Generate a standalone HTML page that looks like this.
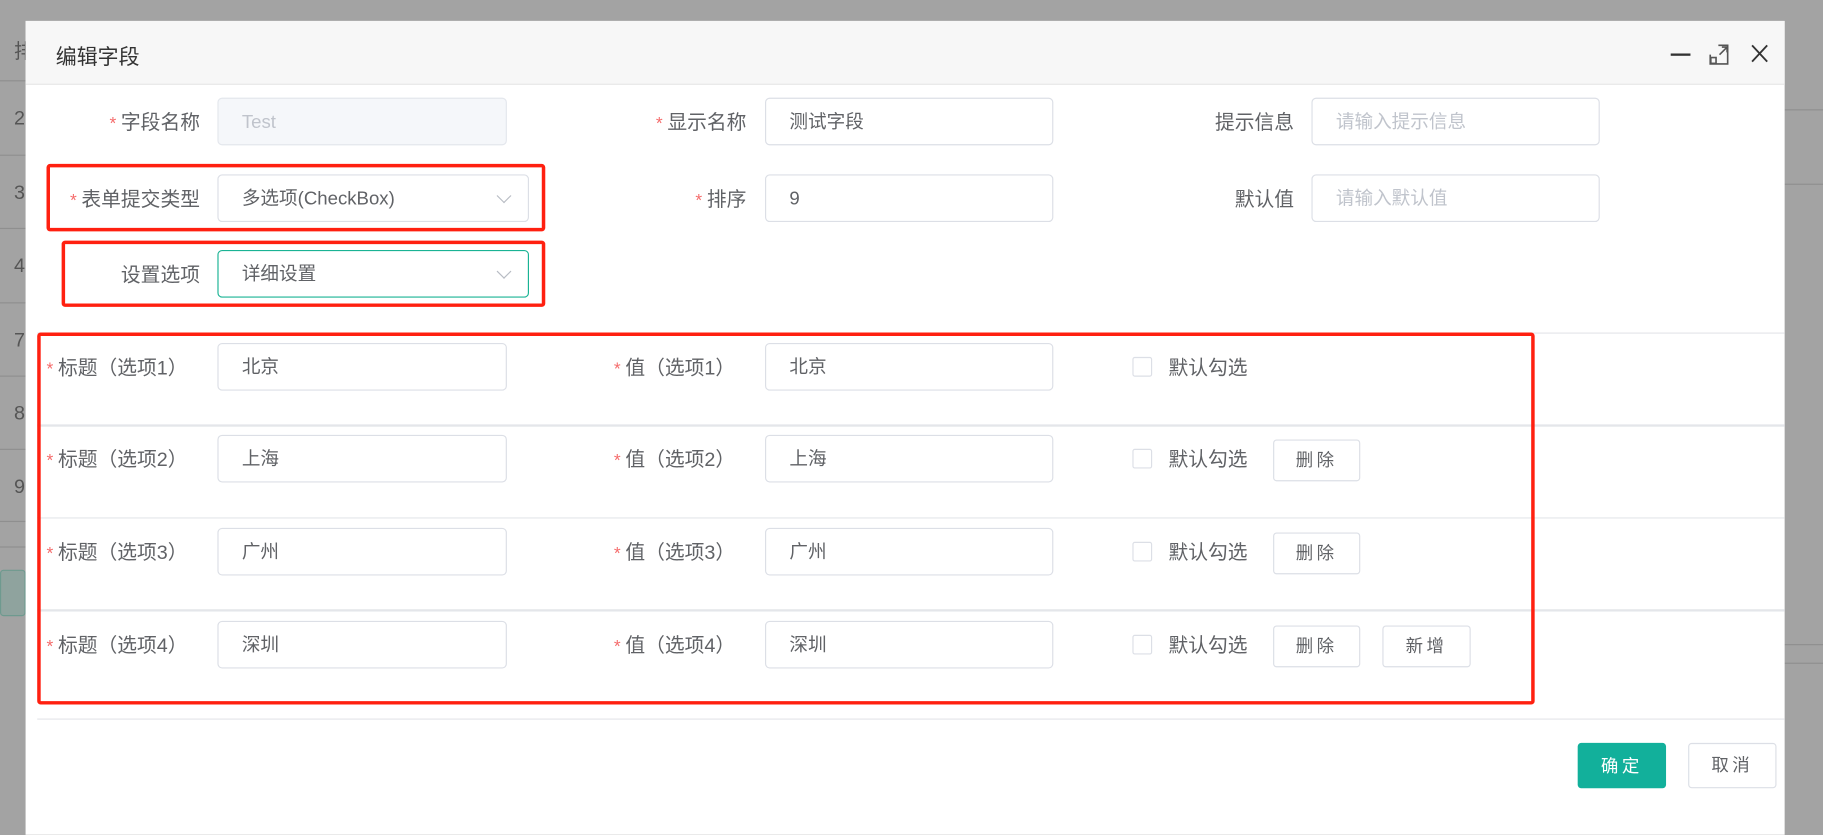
<!DOCTYPE html>
<html><head><meta charset="utf-8"><style>
html,body{margin:0;padding:0;width:1823px;height:825px;overflow:hidden;background:#a3a3a3;}
#s{position:absolute;left:0;top:0;width:1568px;height:710px;transform:scale(1.16263);transform-origin:0 0;font-family:"Liberation Sans","Noto Sans CJK SC",sans-serif;}
.a{position:absolute;}
.bg{color:#555;font-size:17px;}
.gl{position:absolute;height:1px;background:#8f8f8f;}
.dlg{position:absolute;left:22px;top:18px;width:1513px;height:700px;background:#fff;}
.hd{position:absolute;left:0;top:0;width:1513px;height:54px;background:#f7f7f7;border-bottom:1px solid #e8e8e8;}
.lb{position:absolute;font-size:17px;color:#606266;line-height:44px;white-space:nowrap;}
.r{text-align:right;}
.st{color:#f56c6c;margin-right:4px;font-size:15px;}
.in{position:absolute;box-sizing:border-box;border:1px solid #dcdfe6;border-radius:4px;height:41px;line-height:42px;padding-left:20px;font-size:16px;color:#606266;background:#fff;overflow:hidden;}
.ph{color:#c0c4cc;}
.chev{position:absolute;right:16px;top:13px;width:8px;height:8px;border-right:1px solid #b8bcc4;border-bottom:1px solid #b8bcc4;transform:rotate(45deg);}
.hl{position:absolute;left:10px;width:1503px;background:#e4e6ea;}
.red{position:absolute;border:3px solid #ff2010;border-radius:3px;box-sizing:border-box;}
.cb{position:absolute;width:17px;height:17px;border:1px solid #dcdfe6;border-radius:2px;box-sizing:border-box;}
.btn{position:absolute;box-sizing:border-box;border:1px solid #dcdfe6;border-radius:3px;height:36px;line-height:36px;text-align:center;font-size:15px;color:#606266;background:#fff;letter-spacing:3px;}
</style></head><body><div id="s">
<div class="a bg" style="left:12px;top:30px">排</div>
<div class="a bg" style="left:12px;top:92px">2</div>
<div class="a bg" style="left:12px;top:156px">3</div>
<div class="a bg" style="left:12px;top:219px">4</div>
<div class="a bg" style="left:12px;top:283px">7</div>
<div class="a bg" style="left:12px;top:346px">8</div>
<div class="a bg" style="left:12px;top:409px">9</div>
<div class="gl" style="left:0;width:22px;top:69px"></div>
<div class="gl" style="left:0;width:22px;top:133px"></div>
<div class="gl" style="left:0;width:22px;top:196px"></div>
<div class="gl" style="left:0;width:22px;top:260px"></div>
<div class="gl" style="left:0;width:22px;top:323px"></div>
<div class="gl" style="left:0;width:22px;top:386px"></div>
<div class="gl" style="left:0;width:22px;top:448px"></div>
<div class="gl" style="left:0;width:22px;top:470px"></div>
<div class="a" style="left:0;top:490px;width:22px;height:40px;background:#8fa39e;border:1px solid #6e9a8f;box-sizing:border-box;border-radius:3px"></div>
<div class="gl" style="left:1535px;width:33px;top:94px"></div>
<div class="gl" style="left:1535px;width:33px;top:158px"></div>
<div class="gl" style="left:1535px;width:33px;top:554px"></div>
<div class="gl" style="left:1535px;width:33px;top:570px"></div>

<div class="dlg">
<div class="hd">
<div class="a" style="left:26px;top:17px;font-size:18px;color:#333">编辑字段</div>
<div class="a" style="left:1415px;top:28px;width:17px;height:2px;background:#333"></div>
<svg class="a" style="left:1447px;top:19px" width="20" height="20" viewBox="0 0 20 20" fill="none" stroke="#555" stroke-width="1.4"><path d="M2 10V18H17V2H9"/><rect x="2.5" y="12.5" width="4.5" height="5"/><path d="M10 10L16 4M12 3.5H16.5V8"/></svg>
<svg class="a" style="left:1483px;top:19px" width="17" height="18" viewBox="0 0 17 18" stroke="#333" stroke-width="1.6"><path d="M2 2L15 16M15 2L2 16"/></svg>
</div>

<div class="lb r" style="left:0;width:150px;top:66px"><span class="st">*</span>字段名称</div>
<div class="in" style="left:165px;top:66px;width:249px;background:#f5f7fa;border-color:#e4e7ed"><span class="ph">Test</span></div>
<div class="lb r" style="left:420px;width:200px;top:66px"><span class="st">*</span>显示名称</div>
<div class="in" style="left:636px;top:66px;width:248px">测试字段</div>
<div class="lb r" style="left:900px;width:191px;top:66px">提示信息</div>
<div class="in" style="left:1106px;top:66px;width:248px"><span class="ph">请输入提示信息</span></div>

<div class="lb r" style="left:0;width:150px;top:132px"><span class="st">*</span>表单提交类型</div>
<div class="in" style="left:165px;top:132px;width:268px">多选项(CheckBox)<span class="chev"></span></div>
<div class="lb r" style="left:420px;width:200px;top:132px"><span class="st">*</span>排序</div>
<div class="in" style="left:636px;top:132px;width:248px">9</div>
<div class="lb r" style="left:900px;width:191px;top:132px">默认值</div>
<div class="in" style="left:1106px;top:132px;width:248px"><span class="ph">请输入默认值</span></div>

<div class="lb r" style="left:0;width:150px;top:197px">设置选项</div>
<div class="in" style="left:165px;top:197px;width:268px;border-color:#1ab394">详细设置<span class="chev"></span></div>
<div class="red" style="left:18px;top:123px;width:429px;height:58px"></div>
<div class="red" style="left:31px;top:189px;width:416px;height:57px"></div>

<div class="hl" style="top:268px;height:1px"></div>
<div class="hl" style="top:347px;height:2px"></div>
<div class="hl" style="top:427px;height:1px"></div>
<div class="hl" style="top:506px;height:2px"></div>
<div class="hl" style="top:600px;height:1px"></div>

<div class="lb" style="left:18px;top:277px"><span class="st">*</span>标题（选项1）</div>
<div class="in" style="left:165px;top:277px;width:249px">北京</div>
<div class="lb" style="left:506px;top:277px"><span class="st">*</span>值（选项1）</div>
<div class="in" style="left:636px;top:277px;width:248px">北京</div>
<div class="cb" style="left:952px;top:289px"></div>
<div class="lb" style="left:983px;top:277px">默认勾选</div>

<div class="lb" style="left:18px;top:356px"><span class="st">*</span>标题（选项2）</div>
<div class="in" style="left:165px;top:356px;width:249px">上海</div>
<div class="lb" style="left:506px;top:356px"><span class="st">*</span>值（选项2）</div>
<div class="in" style="left:636px;top:356px;width:248px">上海</div>
<div class="cb" style="left:952px;top:368px"></div>
<div class="lb" style="left:983px;top:356px">默认勾选</div>
<div class="btn" style="left:1073px;top:360px;width:75px">删除</div>

<div class="lb" style="left:18px;top:436px"><span class="st">*</span>标题（选项3）</div>
<div class="in" style="left:165px;top:436px;width:249px">广州</div>
<div class="lb" style="left:506px;top:436px"><span class="st">*</span>值（选项3）</div>
<div class="in" style="left:636px;top:436px;width:248px">广州</div>
<div class="cb" style="left:952px;top:448px"></div>
<div class="lb" style="left:983px;top:436px">默认勾选</div>
<div class="btn" style="left:1073px;top:440px;width:75px">删除</div>

<div class="lb" style="left:18px;top:516px"><span class="st">*</span>标题（选项4）</div>
<div class="in" style="left:165px;top:516px;width:249px">深圳</div>
<div class="lb" style="left:506px;top:516px"><span class="st">*</span>值（选项4）</div>
<div class="in" style="left:636px;top:516px;width:248px">深圳</div>
<div class="cb" style="left:952px;top:528px"></div>
<div class="lb" style="left:983px;top:516px">默认勾选</div>
<div class="btn" style="left:1073px;top:520px;width:75px">删除</div>
<div class="btn" style="left:1167px;top:520px;width:76px">新增</div>

<div class="red" style="left:10px;top:268px;width:1288px;height:320px"></div>

<div class="btn" style="left:1335px;top:621px;width:76px;height:39px;line-height:40px;background:#12b09b;border-color:#12b09b;color:#fff">确定</div>
<div class="btn" style="left:1430px;top:621px;width:76px;height:39px;line-height:38px">取消</div>
</div>
</div></body></html>
